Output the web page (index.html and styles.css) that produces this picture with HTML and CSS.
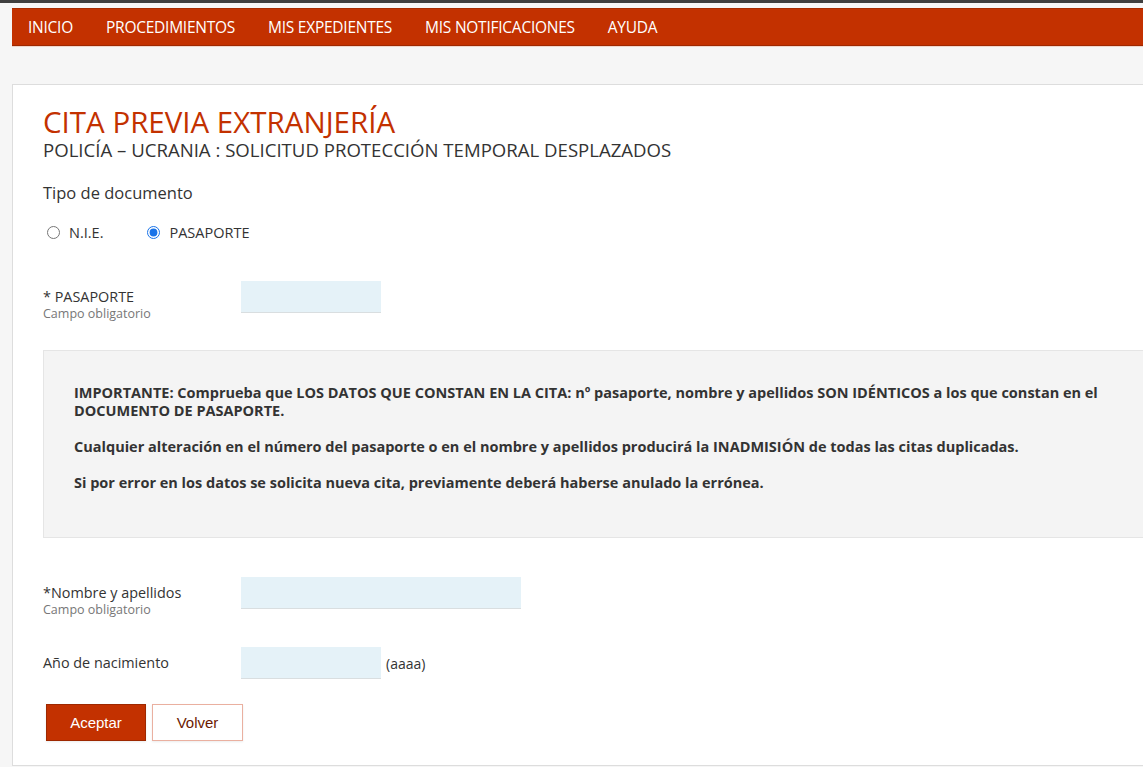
FILE: index.html
```html
<!DOCTYPE html>
<html lang="es">
<head>
    <meta charset="UTF-8">
    <meta name="viewport" content="width=device-width, initial-scale=1.0">
    <title>Cita Previa Extranjería</title>
    <link rel="stylesheet" href="styles.css">
</head>
<body>
    <div class="topbar"></div>
    <div class="page">
        <nav class="menu">
            <a href="#">INICIO</a>
            <a href="#">PROCEDIMIENTOS</a>
            <a href="#">MIS EXPEDIENTES</a>
            <a href="#">MIS NOTIFICACIONES</a>
            <a href="#">AYUDA</a>
        </nav>

        <div class="card">
            <h1>CITA PREVIA EXTRANJERÍA</h1>
            <h2>POLICÍA – UCRANIA : SOLICITUD PROTECCIÓN TEMPORAL DESPLAZADOS</h2>

            <p class="doc-type">Tipo de documento</p>

            <div class="radios">
                <label><input type="radio" name="tipo"> N.I.E.</label>
                <label><input type="radio" name="tipo" checked> PASAPORTE</label>
            </div>

            <div class="field first">
                <div class="label">
                    * PASAPORTE
                    <span>Campo obligatorio</span>
                </div>
                <input type="text" class="short">
            </div>

            <div class="notice">
                <p>IMPORTANTE: Comprueba que LOS DATOS QUE CONSTAN EN LA CITA: nº pasaporte, nombre y apellidos SON IDÉNTICOS a los que constan en el DOCUMENTO DE PASAPORTE.</p>
                <p>Cualquier alteración en el número del pasaporte o en el nombre y apellidos producirá la INADMISIÓN de todas las citas duplicadas.</p>
                <p>Si por error en los datos se solicita nueva cita, previamente deberá haberse anulado la errónea.</p>
            </div>

            <div class="field">
                <div class="label">
                    *Nombre y apellidos
                    <span>Campo obligatorio</span>
                </div>
                <input type="text" class="long">
            </div>

            <div class="field year">
                <div class="label">Año de nacimiento</div>
                <input type="text" class="short">
                <span class="hint">(aaaa)</span>
            </div>

            <div class="buttons">
                <button class="btn primary">Aceptar</button>
                <button class="btn">Volver</button>
            </div>
        </div>
    </div>
</body>
</html>
```

FILE: styles.css
```css
html, body {
    overflow: hidden;
}

body {
    margin: 0;
    background: #f6f6f6;
    color: #333;
    font-family: "Open Sans", sans-serif;
}

.topbar {
    height: 3px;
    background: #3f3f3f;
    border-bottom: 5px solid #f6f6f6;
}

.page {
    margin-left: 12px;
    width: 1200px;
}

.menu {
    display: flex;
    height: 36px;
    align-items: center;
    padding-left: 16px;
    background: #c33100;
    border-top: 1px solid #a52a00;
    border-bottom: 1px solid #9e2800;
    box-shadow: 0 1px 0 #f0d6cc;
}

.menu a {
    color: #fff;
    text-decoration: none;
    font-size: 15.5px;
    letter-spacing: -0.25px;
    margin-right: 33px;
}

.card {
    box-sizing: border-box;
    min-height: 681px;
    margin-top: 38px;
    background: #fff;
    border: 1px solid #ddd;
    padding: 22px 30px 24px;
}

h1 {
    margin: 0;
    font-weight: normal;
    font-size: 29.5px;
    line-height: 30px;
    padding-bottom: 2px;
    color: #c33100;
}

h2 {
    margin: 0;
    font-weight: normal;
    font-size: 18.6px;
    line-height: 22px;
    color: #333;
}

.doc-type {
    margin: 20px 0 0;
    font-size: 16.5px;
    line-height: 24px;
}

.radios {
    display: flex;
    gap: 44px;
    margin-top: 18px;
    padding-left: 4px;
    font-size: 14.5px;
}

.radios label {
    display: flex;
    align-items: center;
    gap: 9px;
}

.radios input {
    margin: 0;
    width: 13px;
    height: 13px;
    accent-color: #1a73e8;
}

.field {
    display: flex;
    align-items: flex-start;
    margin-top: 39px;
}

.label {
    width: 198px;
    font-size: 14.4px;
    line-height: 18px;
    padding-top: 7px;
}

.label span {
    display: block;
    font-size: 12.5px;
    line-height: 16px;
    color: #777;
}

input[type="text"] {
    height: 32px;
    box-sizing: border-box;
    border: none;
    border-bottom: 1px solid #d9dee0;
    background: #e5f2f8;
    margin: 0;
}

.short {
    width: 140px;
}

.long {
    width: 280px;
}

.notice {
    margin-top: 28px;
    background: #f4f4f4;
    border: 1px solid #e5e5e5;
    padding: 33px 30px 45px;
}

.notice p {
    margin: 0 0 18px;
    font-weight: bold;
    font-size: 14.5px;
    line-height: 18px;
}

.notice p:last-child {
    margin-bottom: 0;
}

.field.year {
    margin-top: 29px;
    align-items: center;
}

.year .label {
    padding-top: 0;
}

.hint {
    margin-left: 5px;
    font-size: 14px;
}

.buttons {
    display: flex;
    gap: 6px;
    margin-top: 25px;
    padding-left: 3px;
}

.btn {
    height: 37px;
    width: 91px;
    padding: 0;
    font-family: "Liberation Sans", Arial, sans-serif;
    font-size: 15px;
    background: #fff;
    color: #6b1a00;
    border: 1px solid #eab0a0;
    box-shadow: 0 1px 2px rgba(0, 0, 0, 0.08);
}

.btn.primary {
    width: 100px;
    background: #c33100;
    border-color: #9e2800;
    color: #fff;
}
```
